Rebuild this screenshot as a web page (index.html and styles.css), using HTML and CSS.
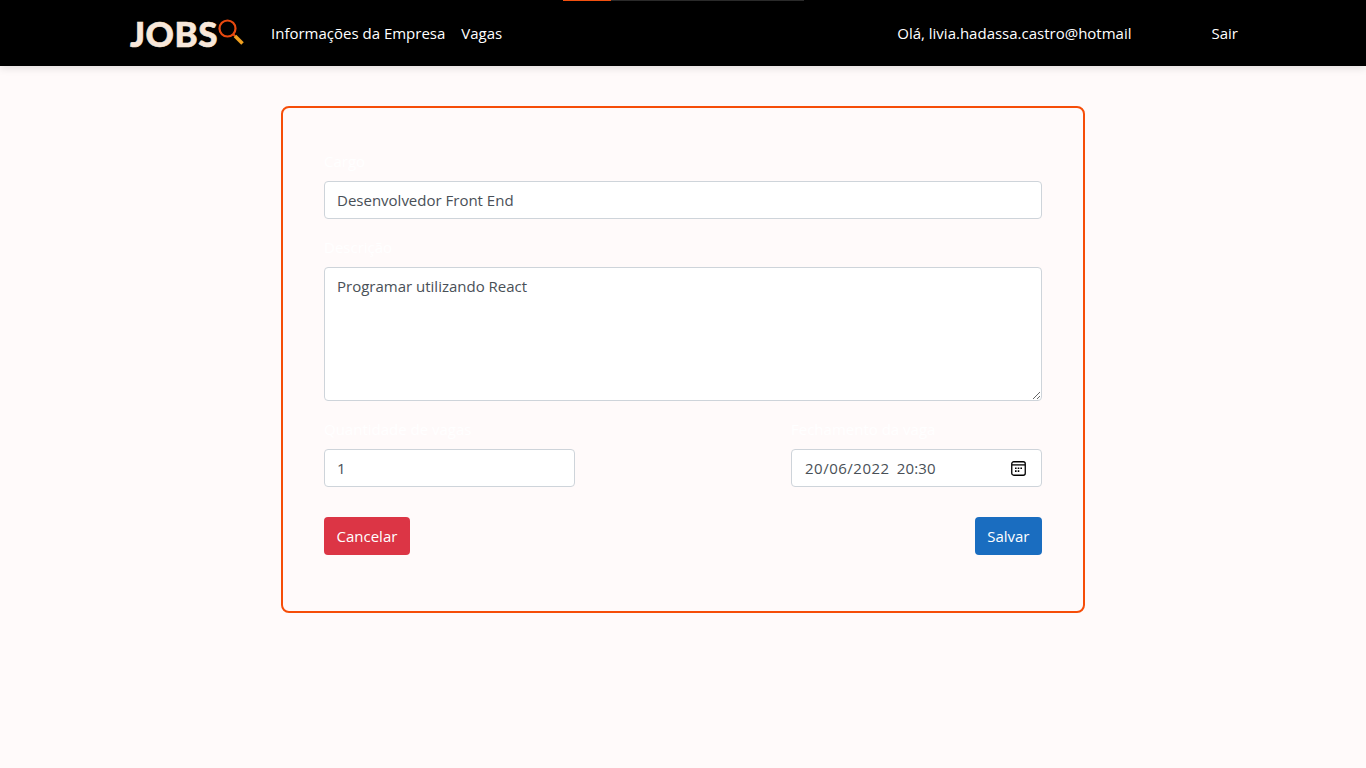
FILE: index.html
```html
<!DOCTYPE html>
<html lang="pt-BR">
<head>
<meta charset="utf-8">
<title>Jobs</title>
<link rel="stylesheet" href="styles.css">
</head>
<body>
<header class="topbar">
  <div class="progress"><span class="progress-on"></span><span class="progress-off"></span></div>
  <a class="logo" href="#">
    <span class="logo-text">JOBS</span>
    <svg class="logo-icon" width="28" height="28" viewBox="0 0 28 28" aria-hidden="true">
      <circle cx="9.5" cy="9.5" r="8" fill="none" stroke="#e8490f" stroke-width="2.2"/>
      <path d="M15.2 15.2l2 2" stroke="#e8490f" stroke-width="2"/>
      <path d="M17 17l7.5 7.5" stroke="#f0a020" stroke-width="3.6"/>
    </svg>
  </a>
  <nav class="nav-main">
    <a href="#">Informações da Empresa</a>
    <a href="#">Vagas</a>
  </nav>
  <div class="nav-user">
    <span>Olá, livia.hadassa.castro@hotmail</span>
    <a href="#">Sair</a>
  </div>
</header>
<main class="page">
  <form class="card">
    <div class="group">
      <label class="label">Cargo</label>
      <input class="control" type="text" value="Desenvolvedor Front End">
    </div>
    <div class="group">
      <label class="label">Descrição</label>
      <textarea class="control area">Programar utilizando React</textarea>
    </div>
    <div class="row">
      <div class="col">
        <label class="label">Quantidade de vagas</label>
        <input class="control" type="text" value="1">
      </div>
      <div class="col">
        <label class="label">Fechamento da vaga</label>
        <div class="control date">
          <span class="day">20/06/2022</span><span class="time">20:30</span>
          <svg class="cal" width="15" height="15" viewBox="0 0 15 15" aria-hidden="true">
            <rect x="0.75" y="0.75" width="13.5" height="13.5" rx="2" fill="none" stroke="#000" stroke-width="1.3"/>
            <path d="M1 3.9h13" stroke="#000" stroke-width="1.3"/>
            <path d="M4 6.5h1.6v1.6H4zM6.7 6.5h1.6v1.6H6.7zM9.4 6.5H11v1.6H9.4zM4 9.3h1.6v1.6H4zM6.7 9.3h1.6v1.6H6.7z" fill="#000"/>
          </svg>
        </div>
      </div>
    </div>
    <div class="actions">
      <button type="button" class="btn btn-cancel">Cancelar</button>
      <button type="button" class="btn btn-save">Salvar</button>
    </div>
  </form>
</main>
</body>
</html>
```
FILE: styles.css
```css
* { box-sizing: border-box; }
html, body { height: 100%; }
body {
  margin: 0;
  background: #fffafa;
  font-family: "Open Sans", "Noto Sans", sans-serif;
  font-size: 15px;
  line-height: 24px;
  color: #212529;
  overflow: hidden;
}
a { color: inherit; text-decoration: none; }
.topbar {
  position: relative;
  display: flex;
  align-items: center;
  height: 66px;
  padding: 0 128px 0 130px;
  background: #000;
  color: #fff;
  box-shadow: 0 2px 8px rgba(0, 0, 0, .12);
}
.progress {
  position: absolute;
  top: 0;
  left: 563px;
  display: flex;
  width: 241px;
  height: 1px;
}
.progress-on { width: 48px; background: #f2500f; }
.progress-off { flex: 1; background: #2a2a2a; }
.logo { display: flex; align-items: center; width: 141px; }
.logo-text {
  font-family: Lato, sans-serif;
  font-weight: 900;
  font-size: 35px;
  line-height: 32px;
  letter-spacing: 0.5px;
  color: #f8e8da;
  -webkit-text-stroke: 0.6px #f8e8da;
}
.nav-main { display: flex; gap: 16px; }
.nav-user { display: flex; gap: 80px; margin-left: auto; }
.page { display: flex; justify-content: center; padding-top: 40px; }
.card {
  width: 804px;
  height: 507px;
  padding: 41px 41px 0;
  background: #fffafa;
  border: 2px solid #f64d08;
  border-radius: 8px;
}
.group { margin-bottom: 16px; }
.label { display: block; margin-bottom: 8px; color: #fff; }
.control {
  display: block;
  width: 100%;
  height: 38px;
  padding: 6px 12px;
  background: #fff;
  border: 1px solid #ced4da;
  border-radius: 4px;
  font: inherit;
  color: #495057;
  outline: none;
}
.area { height: 134px; resize: vertical; }
.row { display: flex; justify-content: space-between; }
.col { width: 251px; }
.date { display: flex; align-items: center; }
.day { margin-left: 1px; letter-spacing: 0.5px; }
.time { margin-left: 7px; letter-spacing: 0.2px; }
.cal { margin-left: auto; margin-right: 3px; }
.actions { display: flex; justify-content: space-between; margin-top: 30px; }
.btn {
  height: 38px;
  padding: 6px 11.5px;
  border: 1px solid transparent;
  border-radius: 4px;
  font: inherit;
  color: #fff;
}
.btn-cancel { background: #dc3545; }
.btn-save { background: #1a6dc0; }
```
